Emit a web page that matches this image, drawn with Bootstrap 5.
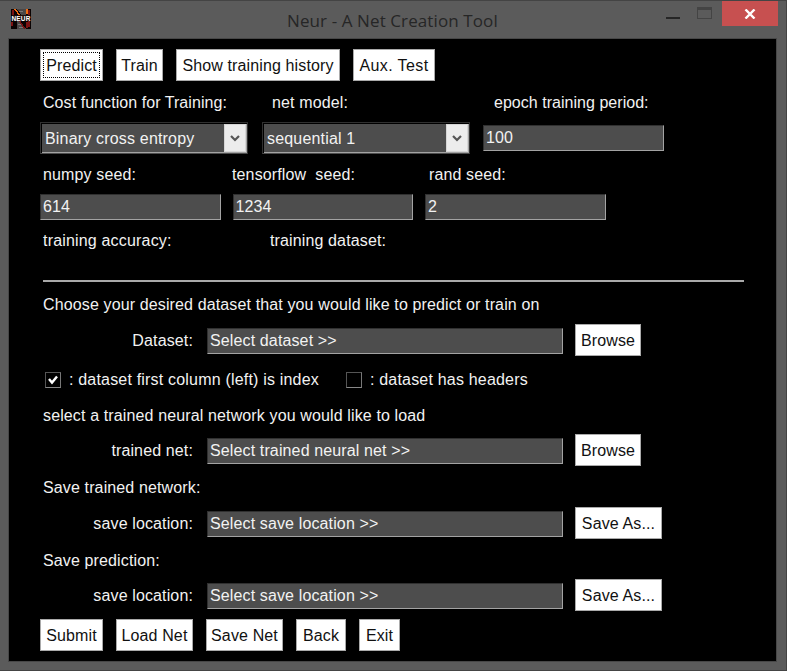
<!DOCTYPE html>
<html lang="en">
<head>
<meta charset="utf-8">
<title>Neur - A Net Creation Tool</title>
<link href="https://cdn.jsdelivr.net/npm/bootstrap@5.3.0/dist/css/bootstrap.min.css" rel="stylesheet">
<style>
body{background:#fff;overflow:hidden;font:16px/20px "Liberation Sans",Arial,sans-serif;letter-spacing:.13px;color:#f2f2f2}
.app-window{width:787px;height:671px;background:#5b5b5b;border:1px solid #444;border-left:0}
.title-strip{height:38px}
.logo{margin:8px 0 0 11px}
.app-title{font:17px/24px "Open Sans",sans-serif;letter-spacing:.1px;color:#262626;margin:8px 0 0 256px;width:212px;white-space:nowrap}
.win-min{width:14px;height:2px;background:#262626;margin:16px 0 0 167px}
.win-max{width:15px;height:12px;border:1px solid #444;border-top-width:3px;margin:6px 0 0 17px}
.win-close{width:56px;height:25px;background:#c75050;border:0;padding:0;margin-left:10px}
.client{margin:0 10px 0 9px;height:622px;background:#000;padding:10px 0 0 31px;outline:1px solid #474747}
.r{white-space:pre}
.tk{height:32px;padding:1px 0 0;border-radius:0;font-size:16px;line-height:20px;letter-spacing:inherit;white-space:nowrap;color:#111;background:#fff;border:1px solid #aaa;flex:none}
.focused{outline:1px dotted #000;outline-offset:-4px}
.w63{width:63px}.w47{width:47px}.w164{width:164px}.w82{width:82px;letter-spacing:.4px}.w77{width:77px}.w50{width:50px}.w41{width:41px}.w66{width:66px}.w87{width:87px}
.gap-tk{gap:13px}
.h32{height:32px}.h40{height:40px}.h41{height:41px}.h26{height:26px}
.field,.field:focus{height:26px;padding:0 2px;border-radius:0;background:#4d4d4d;color:#f2f2f2;font-size:16px;line-height:20px;letter-spacing:inherit;border:1px solid;border-color:#303030 #a3a3a3 #a3a3a3 #303030;box-shadow:none}
.f-num{width:181px}
.seeds .f-num{width:180.5px}
.f-path{width:356px;margin:1px 12px 0 0}
.combo{width:208px;height:32px;border:1px solid #303030;border-bottom-color:#4d4d4d;padding:1px 0 0 1px;background:#000}
.combo-in{height:29px;background:#4d4d4d;border-bottom:1px solid #a3a3a3;border-right:1px solid #a3a3a3;padding-left:3px}
.combo-in>span:first-child{padding-top:2px;letter-spacing:.18px}
.arrow{width:22px;height:28px;background:#ececec;border:1px solid #d6d6d6}
.lab1{padding:2px 0 0 3px}
.rule{width:701px;height:3px;border-top:2px solid #a9a9a9;margin-left:3px}
.side-label{width:153px;margin-right:14px;padding-top:2px}
.chk{width:16px;height:16px;border:1px solid;border-color:#555 #777 #888 #555;flex:none}
.c-a{width:229px;letter-spacing:.06px}.c-b{width:222px}.c-c{letter-spacing:.03px}
.s-a{width:189px}.s-b{width:197px}
.t-a{width:227px;letter-spacing:.18px}
.second{margin:0 13px 0 14px}
.seeds{gap:12px}
.pt-rule{height:23px;padding-top:20px}
.checks{padding:7px 0 0 5px}
.k-a{margin:0 27px 0 8px;width:250px;letter-spacing:.19px}
.k-b{margin-left:8px;letter-spacing:.19px}
.pick{height:37px;padding-top:0}
.sv{padding-top:3px}
.foot{padding-top:8px}
</style>
<script src="https://cdn.jsdelivr.net/npm/bootstrap@5.3.0/dist/js/bootstrap.bundle.min.js"></script>
</head>
<body>
<main class="app-window">
  <header class="title-strip d-flex align-items-start">
    <svg class="logo flex-shrink-0" width="20" height="20" viewBox="0 0 20 20" shape-rendering="crispEdges">
      <rect width="20" height="20" fill="#4a4646"/>
      <path d="M0 0h6l9 12V0h5v20h-5L6 9v11H0z" fill="#0a0303"/>
      <path d="M8 2h4M7 15h4M8 18h5" stroke="#7a7575"/>
      <path d="M7 10l7 10M16 13v6M18 1v17M1 13v4M2 1v5" stroke="#7c1212" stroke-width="1.3"/>
      <path d="M4 0l5 7M16 0v5" stroke="#f06b12" stroke-width="1.6"/>
      <path d="M1 6h18v6H1z" fill="#1c0c0a"/>
      <text x=".5" y="11.5" font-family="Liberation Sans" font-weight="bold" font-size="6.5" textLength="19" lengthAdjust="spacing" fill="#fff">NEUR</text>
    </svg>
    <div class="app-title">Neur - A Net Creation Tool</div>
    <div class="win-min"></div>
    <div class="win-max"></div>
    <button class="win-close d-flex justify-content-center align-items-center" aria-label="Close"><svg width="12" height="10" viewBox="0 0 12 10"><path d="M1.5.5l9 9M10.5.5l-9 9" stroke="#fff" stroke-width="2.4"/></svg></button>
  </header>
  <section class="client">
    <div class="d-flex gap-tk h32">
      <button class="btn tk w63 focused">Predict</button><button class="btn tk w47">Train</button><button class="btn tk w164">Show training history</button><button class="btn tk w82">Aux. Test</button>
    </div>
    <div class="d-flex align-items-center h41 r lab1"><span class="c-a">Cost function for Training:</span><span class="c-b">net model:</span><span class="c-c">epoch training period:</span></div>
    <div class="d-flex align-items-center h32">
      <div class="combo"><div class="combo-in d-flex justify-content-between align-items-center"><span>Binary cross entropy</span><span class="arrow d-flex align-items-center justify-content-center"><svg width="10" height="7" viewBox="0 0 10 7"><path d="M1 1l4 4 4-4" fill="none" stroke="#555" stroke-width="2.2"/></svg></span></div></div>
      <div class="combo second"><div class="combo-in d-flex justify-content-between align-items-center"><span>sequential 1</span><span class="arrow d-flex align-items-center justify-content-center"><svg width="10" height="7" viewBox="0 0 10 7"><path d="M1 1l4 4 4-4" fill="none" stroke="#555" stroke-width="2.2"/></svg></span></div></div>
      <input class="form-control field f-num" value="100">
    </div>
    <div class="d-flex align-items-center h40 r lab1"><span class="s-a">numpy seed:</span><span class="s-b">tensorflow  seed:</span><span>rand seed:</span></div>
    <div class="d-flex h26 seeds"><input class="form-control field f-num" value="614"><input class="form-control field f-num" value="1234"><input class="form-control field f-num" value="2"></div>
    <div class="d-flex align-items-center h40 r lab1"><span class="t-a">training accuracy:</span><span>training dataset:</span></div>
    <div class="pt-rule"><div class="rule"></div></div>
    <div class="d-flex align-items-center h41 r lab1">Choose your desired dataset that you would like to predict or train on</div>
    <div class="d-flex align-items-center h32"><label class="side-label text-end">Dataset:</label><input class="form-control field f-path" value="Select dataset &gt;&gt;"><button class="btn tk w66">Browse</button></div>
    <div class="d-flex align-items-center h41 checks r"><span class="chk d-flex align-items-center justify-content-center"><svg width="10" height="10" viewBox="0 0 10 10"><path d="M1 4l3 3.6L9 1.5" fill="none" stroke="#fff" stroke-width="2.4"/></svg></span><span class="k-a">: dataset first column (left) is index</span><span class="chk"></span><span class="k-b">: dataset has headers</span></div>
    <div class="d-flex align-items-center r lab1 pick">select a trained neural network you would like to load</div>
    <div class="d-flex align-items-center h32"><label class="side-label text-end">trained net:</label><input class="form-control field f-path" value="Select trained neural net &gt;&gt;"><button class="btn tk w66">Browse</button></div>
    <div class="d-flex align-items-center h41 lab1 sv">Save trained network:</div>
    <div class="d-flex align-items-center h32"><label class="side-label text-end">save location:</label><input class="form-control field f-path" value="Select save location &gt;&gt;"><button class="btn tk w87">Save As...</button></div>
    <div class="d-flex align-items-center h40 lab1 sv">Save prediction:</div>
    <div class="d-flex align-items-center h32"><label class="side-label text-end">save location:</label><input class="form-control field f-path" value="Select save location &gt;&gt;"><button class="btn tk w87">Save As...</button></div>
    <div class="d-flex gap-tk foot">
      <button class="btn tk w63">Submit</button><button class="btn tk w77">Load Net</button><button class="btn tk w77">Save Net</button><button class="btn tk w50">Back</button><button class="btn tk w41">Exit</button>
    </div>
  </section>
</main>
</body>
</html>
